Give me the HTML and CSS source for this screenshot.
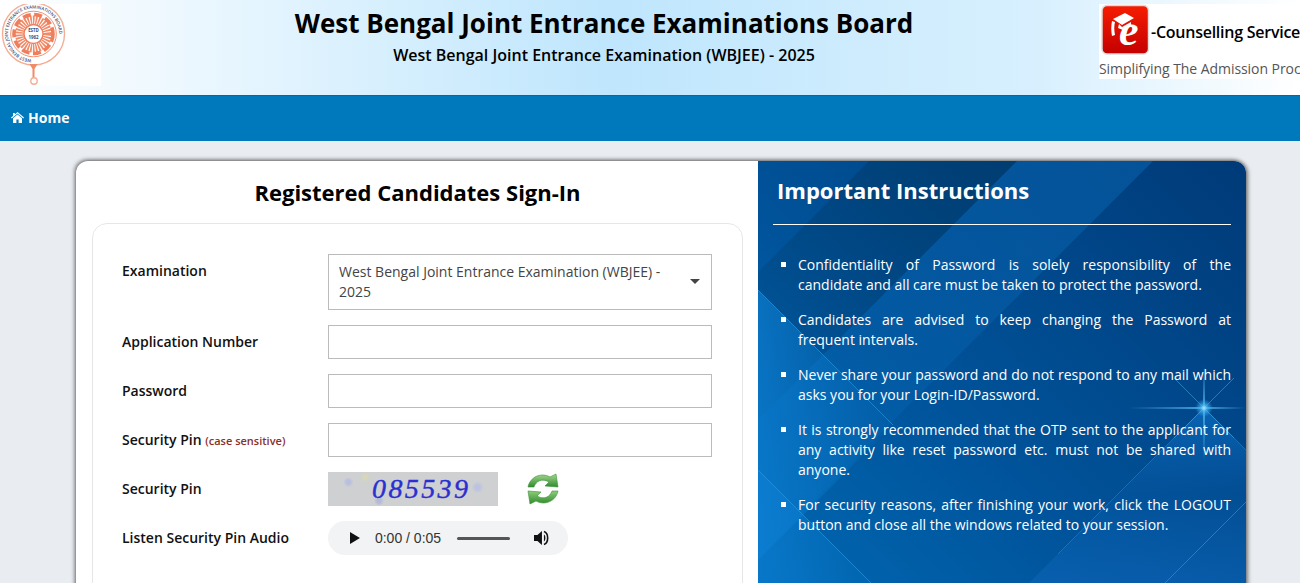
FILE: index.html
```html
<!DOCTYPE html>
<html lang="en">
  <head>
    <meta charset="UTF-8" />
    <meta name="viewport" content="width=device-width, initial-scale=1.0" />
    <title>WBJEE 2025 - Candidate Sign-In</title>
    <link rel="stylesheet" href="styles.css">
  </head>
  <body>
    <header class="top-header">
      <div class="seal-box">
        <svg width="68" height="82" viewBox="0 0 68 82">
          <defs>
            <path id="sealArc" d="M33.5 55.5 A25.5 25.5 0 1 1 33.6 55.5" />
          </defs>
          <circle cx="33.5" cy="30" r="31" fill="#fff" stroke="#f4ae96" stroke-width="1.4" />
          <circle cx="33.5" cy="30" r="22.8" fill="#fff" stroke="#f09273" stroke-width="1" />
          <text class="seal-text"><textPath href="#sealArc" startOffset="2">WEST BENGAL JOINT ENTRANCE EXAMINATIONS BOARD</textPath></text>
          <circle cx="33.5" cy="30" r="14" fill="none" stroke="#f08a68" stroke-width="9" stroke-dasharray="1.6 1" />
          <circle cx="33.5" cy="30" r="19.5" fill="none" stroke="#ef7f5c" stroke-width="3.6" stroke-dasharray="8 3.5" />
          <circle cx="33.5" cy="30" r="9.5" fill="#fff" stroke="#ef7f5c" stroke-width="1.4" />
          <text class="seal-year" x="33.5" y="28" text-anchor="middle">ESTD</text>
          <text class="seal-year" x="33.5" y="35" text-anchor="middle">1962</text>
          <path d="M29.5 60 h8 l-3 5 v9 h-2 v-9z" fill="#f08a68" />
          <circle cx="34" cy="77" r="3.2" fill="#fff" stroke="#f4ae96" stroke-width="1.4" />
        </svg>
      </div>
      <div class="header-title">
        <h1>West Bengal Joint Entrance Examinations Board</h1>
        <p>West Bengal Joint Entrance Examination (WBJEE) - 2025</p>
      </div>
      <div class="ecounsel-box">
        <div class="ecounsel-top">
          <svg class="ecounsel-mark" width="50" height="52" viewBox="0 0 50 52">
            <defs>
              <linearGradient id="redTile" x1="0" y1="0" x2="0" y2="1">
                <stop offset="0" stop-color="#f51d00" />
                <stop offset="1" stop-color="#c40000" />
              </linearGradient>
            </defs>
            <rect x="2" y="1.5" width="46.5" height="48.5" rx="5" fill="url(#redTile)" stroke="#dcdcdc" stroke-width="1.5" />
            <path d="M13 15 L25 9 L34 14 L22 21z" fill="#fff" />
            <path d="M19 20 L22 23 L31 18 L31 22 L23 26 L18 24z" fill="#fff" />
            <path d="M12 17 L15 18 C14 22 14 26 15 31 L12 32 C11 27 11 22 12 17z" fill="#fff" />
            <text class="logo-e" x="19" y="41">e</text>
          </svg>
          <span>-Counselling Service</span>
        </div>
        <div class="ecounsel-tag">Simplifying The Admission Proc</div>
      </div>
    </header>

    <nav class="main-nav">
      <a href="#">
        <svg width="13" height="11" viewBox="0 0 13 11">
          <path d="M6.5 0 L13 5.6 L12.3 6.4 L6.5 1.6 L0.7 6.4 L0 5.6 L2 3.9 V1 H3.8 V2.4z" fill="#fff" />
          <path d="M6.5 2.5 L11 6.2 V11 H7.6 V7.6 H5.4 V11 H2 V6.2z" fill="#fff" />
        </svg>
        Home
      </a>
    </nav>

    <main class="content">
      <div class="login-card">
        <section class="signin-panel">
          <h2>Registered Candidates Sign-In</h2>
          <form class="signin-form">
            <div class="form-row row-top">
              <label>Examination</label>
              <div class="fake-select">
                West Bengal Joint Entrance Examination (WBJEE) - 2025
                <span class="caret"></span>
              </div>
            </div>
            <div class="form-row">
              <label for="appNo">Application Number</label>
              <input id="appNo" type="text" />
            </div>
            <div class="form-row">
              <label for="pwd">Password</label>
              <input id="pwd" type="password" />
            </div>
            <div class="form-row">
              <label for="pin">Security Pin <small>(case sensitive)</small></label>
              <input id="pin" type="text" />
            </div>
            <div class="form-row">
              <label>Security Pin</label>
              <div class="captcha-wrap">
                <div class="captcha">085539</div>
                <svg class="refresh" width="32" height="32" viewBox="0 0 32 32">
                  <defs>
                    <linearGradient id="greenTop" x1="0" y1="0" x2="0" y2="1">
                      <stop offset="0" stop-color="#a4d98f" />
                      <stop offset="1" stop-color="#2f8a2c" />
                    </linearGradient>
                    <linearGradient id="greenLow" x1="0" y1="1" x2="0" y2="0">
                      <stop offset="0" stop-color="#2f8a2c" />
                      <stop offset="1" stop-color="#8ccf78" />
                    </linearGradient>
                  </defs>
                  <path d="M1 14 C3 4 14 -1 23 4 L29 1 L31 14 L18 13 L22 9 C15 5 9 8 7 14z" fill="url(#greenTop)" stroke="#3b8f36" stroke-width=".6" />
                  <path d="M31 18 C29 28 18 33 9 28 L3 31 L1 18 L14 19 L10 23 C17 27 23 24 25 18z" fill="url(#greenLow)" stroke="#3b8f36" stroke-width=".6" />
                </svg>
              </div>
            </div>
            <div class="form-row">
              <label>Listen Security Pin Audio</label>
              <div class="audio-bar">
                <svg width="10" height="12" viewBox="0 0 10 12"><path d="M0 0 L10 6 L0 12z" fill="#111" /></svg>
                <span class="audio-time">0:00 / 0:05</span>
                <span class="audio-track"></span>
                <svg width="16" height="16" viewBox="0 0 16 16">
                  <path d="M0 5 H3.5 L8 1 V15 L3.5 11 H0z" fill="#111" />
                  <path d="M10 4.5 C12 5.5 12 10.5 10 11.5z" fill="#111" />
                  <path d="M10 1.5 C15 3 15 13 10 14.5" fill="none" stroke="#111" stroke-width="1.6" />
                </svg>
              </div>
            </div>
          </form>
        </section>

        <aside class="info-panel">
          <svg class="info-bg" width="489" height="440" viewBox="0 0 489 440">
            <defs>
              <linearGradient id="darkBand" x1="1" y1="0" x2="0" y2="1">
                <stop offset="0" stop-color="#003a68" stop-opacity=".7" />
                <stop offset="1" stop-color="#003a68" stop-opacity=".05" />
              </linearGradient>
              <linearGradient id="lightBand" x1="1" y1="0" x2="0" y2="1">
                <stop offset="0" stop-color="#0a70bf" stop-opacity=".42" />
                <stop offset="1" stop-color="#0a70bf" stop-opacity=".1" />
              </linearGradient>
              <linearGradient id="lowFade" x1="0" y1="0" x2="0" y2="1">
                <stop offset="0" stop-color="#0f78d0" stop-opacity=".6" />
                <stop offset=".45" stop-color="#0f66ba" stop-opacity=".15" />
                <stop offset="1" stop-color="#0f66ba" stop-opacity=".6" />
              </linearGradient>
              <linearGradient id="leftFade" x1="0" y1="0" x2="1" y2="0">
                <stop offset="0" stop-color="#0c7ed2" stop-opacity=".7" />
                <stop offset="1" stop-color="#0c7ed2" stop-opacity="0" />
              </linearGradient>
              <radialGradient id="glow">
                <stop offset="0" stop-color="#b4ecff" />
                <stop offset=".35" stop-color="#4cb8f0" stop-opacity=".8" />
                <stop offset="1" stop-color="#2f9fe8" stop-opacity="0" />
              </radialGradient>
            </defs>
            <path d="M111 0 H259 L0 259 V111z" fill="url(#darkBand)" />
            <path d="M259 0 H395 L0 395 V259z" fill="url(#lightBand)" />
            <path d="M446 247 L489 290 V440 H253z" fill="url(#lowFade)" />
            <path d="M0 129 L135 264 L0 399z" fill="url(#leftFade)" />
            <path d="M0 309 L131 440 H0z" fill="url(#leftFade)" />
            <path d="M0 129 L135 264 M0 309 L131 440 M489 340 L389 440" stroke="#2b9be6" stroke-width="1" fill="none" opacity=".6" />
            <path d="M446 247 L489 290 M446 247 L300 393" stroke="#2f96e0" stroke-width="1" fill="none" opacity=".4" />
            <path class="star-ray" d="M446 205 L447 246 L489 247 L447 248 L446 300 L445 248 L370 247 L445 246z" />
            <path d="M416 217 L476 277 M476 217 L416 277" stroke="#4fb4ee" stroke-width=".7" opacity=".7" />
            <circle cx="446" cy="247" r="9" fill="url(#glow)" />
          </svg>
          <h2>Important Instructions</h2>
          <hr />
          <ul>
            <li>Confidentiality of Password is solely responsibility of the candidate and all care must be taken to protect the password.</li>
            <li>Candidates are advised to keep changing the Password at frequent intervals.</li>
            <li>Never share your password and do not respond to any mail which asks you for your Login-ID/Password.</li>
            <li>It is strongly recommended that the OTP sent to the applicant for any activity like reset password etc. must not be shared with anyone.</li>
            <li>For security reasons, after finishing your work, click the LOGOUT button and close all the windows related to your session.</li>
          </ul>
        </aside>
      </div>
    </main>
  </body>
</html>
```

FILE: styles.css
```css
html,
body {
  height: 583px;
  overflow: hidden;
}
body {
  margin: 0;
  font-family: "Open Sans", "Liberation Sans", sans-serif;
  font-size: 14px;
  color: #111;
  background-color: #e9ecf0;
}
.top-header {
  display: flex;
  align-items: flex-start;
  height: 95px;
  padding-top: 4px;
  box-sizing: border-box;
  background: linear-gradient(90deg, #fff 0%, #bfe6fd 47%, #d8f0fe 80%, #fff 100%);
}
.seal-box {
  flex: none;
  width: 101px;
  height: 82px;
  background-color: #fff;
}
.seal-box svg {
  display: block;
}
.seal-text {
  font-size: 4.4px;
  font-weight: 600;
  fill: #3c4a78;
}
.seal-year {
  font-size: 4.4px;
  font-weight: 700;
  fill: #3c4a78;
}
.header-title {
  flex: 1;
  padding-left: 8px;
  text-align: center;
}
.header-title h1 {
  margin: 0;
  font-size: 26px;
  line-height: 39px;
  font-weight: 700;
  color: #000;
}
.header-title p {
  margin: 0;
  padding-top: 1px;
  font-size: 16px;
  line-height: 22px;
  font-weight: 600;
  color: #000;
}
.ecounsel-box {
  flex: none;
  width: 201px;
  height: 75px;
  overflow: hidden;
  background-color: #fff;
  white-space: nowrap;
}
.ecounsel-top {
  display: flex;
  align-items: flex-start;
  height: 55px;
  padding-left: 1px;
  font-size: 16px;
  font-weight: 600;
  letter-spacing: -0.25px;
  color: #000;
}
.ecounsel-mark {
  flex: none;
}
.ecounsel-top span {
  margin-left: 1px;
  line-height: 56px;
}
.logo-e {
  font-family: "Liberation Serif", serif;
  font-size: 44px;
  font-weight: 700;
  font-style: italic;
  fill: #fff;
}
.ecounsel-tag {
  font-size: 14px;
  line-height: 20px;
  letter-spacing: -0.06px;
  color: #555;
}
.main-nav {
  height: 46px;
  box-sizing: border-box;
  padding-left: 11px;
  border-top: 1px solid #006aa6;
  background-color: #0079bc;
}
.main-nav a {
  display: inline-flex;
  align-items: center;
  gap: 4px;
  height: 43px;
  color: #fff;
  font-weight: 700;
  font-size: 14px;
  text-decoration: none;
}
.content {
  padding: 20px 54px 0 76px;
}
.login-card {
  display: flex;
  min-height: 560px;
  border-radius: 12px;
  background-color: #fff;
  box-shadow: -1px -1px 4px rgba(0, 0, 0, 0.55), 2px 1px 4px rgba(0, 0, 0, 0.4);
  overflow: hidden;
}
.signin-panel {
  flex: none;
  width: 682px;
  box-sizing: border-box;
  padding: 0 15px 0 16px;
}
.signin-panel h2 {
  margin: 0;
  height: 62px;
  font-size: 22px;
  line-height: 62px;
  font-weight: 700;
  text-align: center;
  color: #000;
}
.signin-form {
  display: flex;
  flex-direction: column;
  gap: 15px;
  min-height: 400px;
  padding: 30px 30px 30px 29px;
  border: 1px solid #e6e6e6;
  border-radius: 15px;
}
.form-row {
  display: grid;
  grid-template-columns: 206px 384px;
  align-items: center;
}
.form-row.row-top {
  align-items: start;
}
.form-row.row-top label {
  padding-top: 7px;
}
.form-row label {
  font-size: 14px;
  line-height: 20px;
  font-weight: 600;
  color: #111;
}
.form-row small {
  font-size: 11px;
  color: #8a2f2a;
}
.form-row input {
  height: 34px;
  box-sizing: border-box;
  border: 1px solid #bbb;
  background-color: #fff;
  font-family: inherit;
}
.fake-select {
  position: relative;
  box-sizing: border-box;
  height: 56px;
  padding: 7px 40px 7px 10px;
  border: 1px solid #bbb;
  font-size: 14px;
  line-height: 20px;
  color: #444;
}
.caret {
  position: absolute;
  right: 11px;
  top: 24px;
  border-top: 5px solid #444;
  border-left: 5px solid transparent;
  border-right: 5px solid transparent;
}
.captcha-wrap {
  display: flex;
  align-items: center;
  gap: 29px;
}
.captcha {
  width: 170px;
  height: 34px;
  padding-left: 44px;
  box-sizing: border-box;
  background-color: #ced0d2;
  background-image: radial-gradient(circle at 12% 30%, #b9bfe0 0 2px, transparent 5px), radial-gradient(circle at 30% 85%, #b5bad6 0 2px, transparent 5px), radial-gradient(circle at 88% 45%, #bcc2e2 0 2px, transparent 6px), radial-gradient(circle at 22% 15%, #d8d6b8 0 2px, transparent 5px);
  font-family: "Liberation Serif", serif;
  font-style: italic;
  font-size: 28px;
  line-height: 33px;
  letter-spacing: 2.4px;
  -webkit-text-stroke: 0.4px #2a2fd0;
  color: #2a2fd0;
}
.audio-bar {
  display: flex;
  align-items: center;
  width: 240px;
  height: 34px;
  box-sizing: border-box;
  padding: 0 18px 0 22px;
  border-radius: 17px;
  background-color: #f1f3f4;
}
.audio-time {
  flex: none;
  margin-left: 15px;
  font-family: "Liberation Sans", sans-serif;
  font-size: 14px;
  color: #333;
  white-space: nowrap;
}
.audio-track {
  flex: none;
  width: 53px;
  height: 3px;
  margin: 0 24px 0 16px;
  border-radius: 2px;
  background-color: #555;
}
.info-panel {
  position: relative;
  flex: 1;
  box-sizing: border-box;
  padding: 0 15px;
  background: linear-gradient(45deg, #0070bb 0%, #005299 50%, #003a78 100%);
  color: #fff;
  overflow: hidden;
}
.info-bg {
  position: absolute;
  left: 0;
  top: 0;
}
.star-ray {
  fill: #5cc0f5;
  opacity: 0.75;
}
.info-panel h2,
.info-panel hr,
.info-panel ul {
  position: relative;
}
.info-panel h2 {
  margin: 0;
  padding-left: 4px;
  height: 63px;
  font-size: 22px;
  line-height: 58px;
  font-weight: 700;
}
.info-panel hr {
  margin: 0 0 30px;
  border: 0;
  border-top: 1px solid #fff;
}
.info-panel ul {
  margin: 0;
  padding: 0 0 0 25px;
  list-style: square;
}
.info-panel li {
  margin-bottom: 15px;
  font-size: 14px;
  line-height: 20px;
  text-align: justify;
}
```
